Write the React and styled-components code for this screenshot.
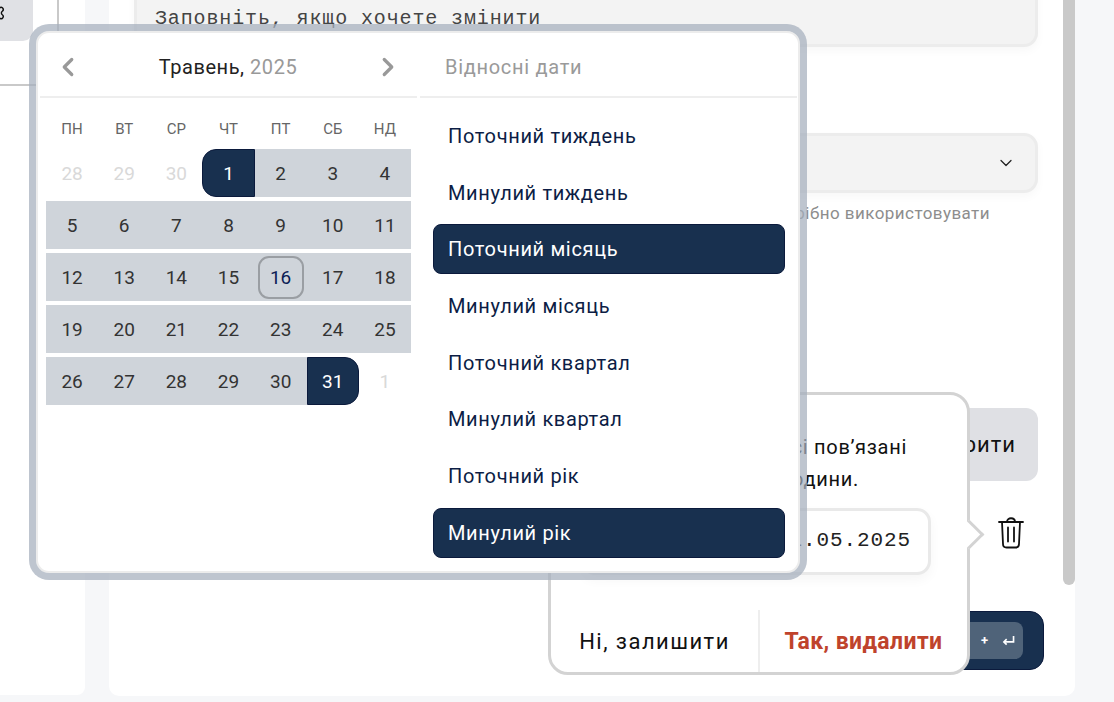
import React from "react";
import styled, { createGlobalStyle, css } from "styled-components";
import { ChevronDown, ChevronLeft, ChevronRight, Settings } from "lucide-react";

const Global = createGlobalStyle`
  html, body { margin: 0; padding: 0; background: #f6f7f9; }
  body { font-family: Roboto, "Noto Sans", sans-serif; }
  * { box-sizing: border-box; }
`;

const navy = "#18304f";
const navyEdge = "#0b1a3c";

const Page = styled.div`
  position: relative;
  width: 1114px;
  height: 702px;
  overflow: hidden;
  display: flex;
  gap: 24px;
  align-items: flex-start;
`;

const Sidebar = styled.aside`
  width: 85px;
  height: 695px;
  background: #fff;
  border-bottom-right-radius: 8px;
`;

const SidebarHead = styled.div`
  height: 86px;
  display: flex;
  align-items: flex-start;
  gap: 24px;
  border-bottom: 2px solid #c9c9c9;
`;

const ToolButton = styled.div`
  width: 33px;
  height: 41px;
  padding: 2px 0 0;
  background: #e0e1e5;
  border-bottom-right-radius: 10px;
  display: flex;
  justify-content: flex-end;
  svg { margin-right: 27px; flex: none; color: #111; }
`;

const HeadDivider = styled.div`
  width: 2px;
  height: 84px;
  background: #c9c9c9;
`;

const Main = styled.main`
  position: relative;
  width: 966px;
  height: 696px;
  padding: 0 37px 0 25px;
  overflow: hidden;
  background: #fff;
  border-bottom-left-radius: 10px;
  border-bottom-right-radius: 10px;
`;

const Scrollbar = styled.div`
  position: absolute;
  top: 0;
  right: 0;
  width: 12px;
  height: 585px;
  background: #c9c9c9;
  border-bottom-left-radius: 6px;
  border-bottom-right-radius: 6px;
`;

const fieldLook = css`
  background: #f3f3f3;
  border: 3px solid #ececec;
  border-radius: 14px;
  box-shadow: 0 4px 10px rgba(0, 0, 0, 0.03);
`;

const TextField = styled.div`
  ${fieldLook}
  height: 70px;
  margin-top: -23px;
  padding: 25px 18px 0;
  font: 20px/28px "Liberation Mono", monospace;
  letter-spacing: 0.87px;
  color: #444;
  white-space: nowrap;
`;

const SelectField = styled.div`
  ${fieldLook}
  height: 60px;
  margin-top: 86px;
  padding-right: 19px;
  display: flex;
  align-items: center;
  justify-content: flex-end;
  color: #222;
`;

const Helper = styled.div`
  margin-top: 9px;
  padding-right: 48px;
  height: 22px;
  font-size: 17px;
  line-height: 22px;
  letter-spacing: 0.45px;
  text-align: right;
  color: #8d8d8d;
`;

const ActionRow = styled.div`
  margin-top: 184px;
  display: flex;
  justify-content: flex-end;
`;

const GhostButton = styled.div`
  height: 73px;
  padding: 0 22px;
  display: flex;
  align-items: center;
  background: #dfe0e4;
  border-radius: 12px;
  font-size: 22px;
  letter-spacing: 1px;
  color: #111;
`;

const DateRow = styled.div`
  margin-top: 36px;
  display: flex;
  align-items: center;
  justify-content: flex-end;
  padding-right: 14px;
`;

const TrashButton = styled.div`
  width: 26px;
  height: 32px;
  color: #111;
`;

const Footer = styled.div`
  margin: 62px -6px 0 0;
  display: flex;
  justify-content: flex-end;
`;

const SaveButton = styled.div`
  width: 300px;
  height: 59px;
  padding: 10px 20px 0 0;
  display: flex;
  justify-content: flex-end;
  background: ${navy};
  border: 1px solid ${navyEdge};
  border-radius: 14px;
`;

const Keys = styled.div`
  width: 90px;
  height: 37px;
  padding: 0 8px 0 0;
  display: flex;
  align-items: center;
  justify-content: flex-end;
  gap: 14px;
  background: #4f6379;
  border-radius: 8px;
  color: #fff;
  font-size: 13px;
  font-weight: 700;
`;

const Calendar = styled.section`
  position: absolute;
  left: 29px;
  top: 24px;
  width: 778px;
  height: 556px;
  display: grid;
  grid-template-columns: 381px 377px;
  column-gap: 3px;
  background: #fff;
  background-clip: padding-box;
  border: 7px solid rgba(165, 175, 188, 0.72);
  border-radius: 20px;
  box-shadow: inset 0 0 0 2px #ececec;
`;

const DatesPane = styled.div`
  display: flex;
  flex-direction: column;
`;

const PaneHead = styled.header`
  height: 67px;
  margin-left: ${(p) => p.$inset}px;
  padding: ${(p) => p.$pad};
  display: flex;
  align-items: center;
  justify-content: ${(p) => p.$justify};
  border-bottom: 2px solid #eeeeee;
`;

const MonthTitle = styled.div`
  font-size: 20px;
  letter-spacing: 0.55px;
  color: #222;
  span { color: #999; }
`;

const Arrow = styled.span`
  display: flex;
  color: #999;
`;

const RelativeTitle = styled.div`
  font-size: 20px;
  letter-spacing: 0.7px;
  color: #9a9a9a;
`;

const Weekdays = styled.div`
  margin: 20px 0 9px 10px;
  width: 365px;
  display: grid;
  grid-template-columns: repeat(7, 1fr);
  font-size: 15px;
  line-height: 22px;
  color: #666;
  text-align: center;
`;

const Days = styled.div`
  margin-left: 10px;
  width: 365px;
  display: grid;
  grid-template-columns: repeat(7, 1fr);
  grid-auto-rows: 48px;
  row-gap: 4px;
`;

const dayKinds = {
  out: css`color: #d9d9d9;`,
  range: css`background: #cfd4da; color: #333;`,
  start: css`
    background: ${navy};
    color: #fff;
    border: 1px solid ${navyEdge};
    border-radius: 14px 0 0 14px;
  `,
  end: css`
    background: ${navy};
    color: #fff;
    border: 1px solid ${navyEdge};
    border-radius: 0 14px 14px 0;
  `,
};

const Day = styled.div`
  display: flex;
  align-items: center;
  justify-content: center;
  font-size: 19px;
  ${(p) => dayKinds[p.$kind]}
`;

const TodayMark = styled.span`
  width: 46px;
  height: 43px;
  display: flex;
  align-items: center;
  justify-content: center;
  border: 2px solid #9a9ea3;
  border-radius: 11px;
  color: #0c1d55;
`;

const RelativePane = styled.div`
  display: flex;
  flex-direction: column;
`;

const RelativeList = styled.ul`
  list-style: none;
  margin: 13px 0 0 13px;
  padding: 0;
  width: 352px;
  display: flex;
  flex-direction: column;
  gap: 6.7px;
`;

const RelativeItem = styled.li`
  height: 50px;
  padding: 0 14px;
  display: flex;
  align-items: center;
  font-size: 20px;
  letter-spacing: 0.65px;
  border-radius: 8px;
  border: 1px solid ${(p) => (p.$active ? navyEdge : "transparent")};
  background: ${(p) => (p.$active ? navy : "transparent")};
  color: ${(p) => (p.$active ? "#fff" : "#0c1d45")};
`;

const Confirm = styled.section`
  position: absolute;
  left: 548px;
  top: 392px;
  width: 422px;
  height: 283px;
  display: flex;
  flex-direction: column;
  background: #fff;
  border: 3px solid #d3d3d3;
  border-radius: 20px;
`;

const ConfirmArrow = styled.span`
  position: absolute;
  right: -13px;
  top: 129px;
  width: 21px;
  height: 21px;
  background: #fff;
  border-top: 3px solid #d3d3d3;
  border-right: 3px solid #d3d3d3;
  transform: rotate(45deg);
`;

const ConfirmText = styled.div`
  height: 100px;
  padding-top: 36px;
`;

const ConfirmLine = styled.div`
  height: 32px;
  padding-right: ${(p) => p.$end}px;
  font-size: 20px;
  line-height: 32px;
  letter-spacing: 0.7px;
  text-align: right;
  white-space: nowrap;
  color: #111;
`;

const RangeField = styled.div`
  height: 67px;
  margin: 13px 36px 0 30px;
  padding: 0 17px 2px 0;
  display: flex;
  align-items: center;
  justify-content: flex-end;
  background: #fff;
  border: 3px solid #e9e9e9;
  border-radius: 14px;
  box-shadow: 0 5px 12px rgba(0, 0, 0, 0.04);
  font: 21px "Liberation Mono", monospace;
  letter-spacing: 0.9px;
  color: #222;
  white-space: nowrap;
`;

const ConfirmActions = styled.div`
  margin-top: auto;
  height: 62px;
  display: grid;
  grid-template-columns: 207px 1fr;
`;

const ConfirmButton = styled.div`
  display: flex;
  align-items: center;
  justify-content: center;
  font-size: ${(p) => (p.$danger ? "23px" : "22px")};
  letter-spacing: ${(p) => (p.$danger ? "0.4px" : "1.45px")};
  font-weight: ${(p) => (p.$danger ? 700 : 400)};
  color: ${(p) => (p.$danger ? "#bf432c" : "#111")};
  border-left: ${(p) => (p.$danger ? "2px solid #eeeeee" : "none")};
`;

const TrashIcon = () => (
  <svg viewBox="0 0 26 32" width="26" height="32" fill="none" stroke="currentColor" strokeWidth="1.8" strokeLinecap="round" strokeLinejoin="round">
    <path d="M1 5h24" />
    <path d="M9 5c0-5 8-5 8 0" />
    <path d="M4 5l1 22c0 2 1 3.5 3.5 3.5h9c2.500 0 3.500-1.500 3.500-3.500l1-22" />
    <path d="M10 10.500v14M16 10.500v14" />
  </svg>
);

const ReturnIcon = () => (
  <svg viewBox="0 0 14 12" width="13" height="11" fill="none" stroke="currentColor" strokeWidth="1.8">
    <path d="M12.500 1v6.500H2" />
    <path d="M5 4.500L2 7.500l3 3" />
  </svg>
);

const row = (start, end) => {
  const out = [];
  for (let d = start; d <= end; d++) out.push({ d, kind: "range" });
  return out;
};

const days = [
  { d: 28, kind: "out" },
  { d: 29, kind: "out" },
  { d: 30, kind: "out" },
  { d: 1, kind: "start" },
  ...row(2, 30),
  { d: 31, kind: "end" },
  { d: 1, kind: "out" },
];

const weekdays = ["ПН", "ВТ", "СР", "ЧТ", "ПТ", "СБ", "НД"];

const ranges = [
  { label: "Поточний тиждень" },
  { label: "Минулий тиждень" },
  { label: "Поточний місяць", active: true },
  { label: "Минулий місяць" },
  { label: "Поточний квартал" },
  { label: "Минулий квартал" },
  { label: "Поточний рік" },
  { label: "Минулий рік", active: true },
];

export default function App() {
  return (
    <Page>
      <Global />
      <Sidebar>
        <SidebarHead>
          <ToolButton>
            <Settings size={22} strokeWidth={1.6} />
          </ToolButton>
          <HeadDivider />
        </SidebarHead>
      </Sidebar>
      <Main>
        <TextField>Заповніть, якщо хочете змінити</TextField>
        <SelectField>
          <ChevronDown size={20} strokeWidth={1.5} />
        </SelectField>
        <Helper>Це зручно, якщо вам потрібно використовувати</Helper>
        <ActionRow>
          <GhostButton>Створити</GhostButton>
        </ActionRow>
        <DateRow>
          <TrashButton>
            <TrashIcon />
          </TrashButton>
        </DateRow>
        <Footer>
          <SaveButton>
            <Keys>
              <span>+</span>
              <ReturnIcon />
            </Keys>
          </SaveButton>
        </Footer>
        <Scrollbar />
      </Main>

      <Confirm>
        <ConfirmArrow />
        <ConfirmText>
          <ConfirmLine $end={60}>Усі пов’язані</ConfirmLine>
          <ConfirmLine $end={108}>години.</ConfirmLine>
        </ConfirmText>
        <RangeField>31.05.2025</RangeField>
        <ConfirmActions>
          <ConfirmButton>Ні, залишити</ConfirmButton>
          <ConfirmButton $danger>Так, видалити</ConfirmButton>
        </ConfirmActions>
      </Confirm>

      <Calendar>
        <DatesPane>
          <PaneHead $inset={4} $pad="6px 14px 0 13px" $justify="space-between">
            <Arrow>
              <ChevronLeft size={30} strokeWidth={2.6} />
            </Arrow>
            <MonthTitle>
              Травень, <span>2025</span>
            </MonthTitle>
            <Arrow>
              <ChevronRight size={30} strokeWidth={2.6} />
            </Arrow>
          </PaneHead>
          <Weekdays>
            {weekdays.map((w) => (
              <span key={w}>{w}</span>
            ))}
          </Weekdays>
          <Days>
            {days.map((c, i) => (
              <Day key={i} $kind={c.kind}>
                {c.d === 16 ? <TodayMark>16</TodayMark> : c.d}
              </Day>
            ))}
          </Days>
        </DatesPane>
        <RelativePane>
          <PaneHead $inset={0} $pad="6px 0 0 25px" $justify="flex-start">
            <RelativeTitle>Відносні дати</RelativeTitle>
          </PaneHead>
          <RelativeList>
            {ranges.map((r) => (
              <RelativeItem key={r.label} $active={r.active}>
                {r.label}
              </RelativeItem>
            ))}
          </RelativeList>
        </RelativePane>
      </Calendar>
    </Page>
  );
}
